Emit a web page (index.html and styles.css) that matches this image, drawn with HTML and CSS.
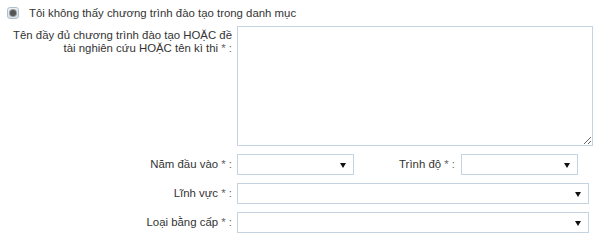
FILE: index.html
```html
<!DOCTYPE html>
<html lang="vi">
<head>
    <meta charset="UTF-8">
    <title>Chương trình đào tạo</title>
    <link rel="stylesheet" href="styles.css">
</head>
<body>
    <div class="edu-form">
        <label class="radio-row">
            <span class="radio-box"><span class="radio-dot"></span></span>
            Tôi không thấy chương trình đào tạo trong danh mục
        </label>

        <div class="form-row">
            <div class="form-label">Tên đầy đủ chương trình đào tạo HOẶC đề tài nghiên cứu HOẶC tên kì thi <span class="req">* :</span></div>
            <textarea class="form-textarea"></textarea>
        </div>

        <div class="form-row row-select">
            <div class="form-label">Năm đầu vào <span class="req">* :</span></div>
            <div class="split">
                <div class="select select-short"><span class="arrow"></span></div>
                <div class="form-label label-inline">Trình độ <span class="req">* :</span></div>
                <div class="select select-short"><span class="arrow"></span></div>
            </div>
        </div>

        <div class="form-row row-select">
            <div class="form-label">Lĩnh vực <span class="req">* :</span></div>
            <div class="select select-wide"><span class="arrow"></span></div>
        </div>

        <div class="form-row row-select">
            <div class="form-label">Loại bằng cấp <span class="req">* :</span></div>
            <div class="select select-wide"><span class="arrow"></span></div>
        </div>
    </div>
</body>
</html>
```

FILE: styles.css
```css
* {
    margin: 0;
    padding: 0;
    box-sizing: border-box;
}

body {
    font-family: "Liberation Sans", Arial, sans-serif;
    font-size: 11.4px;
    color: #333;
    background: #fff;
}

.edu-form {
    width: 600px;
    padding-top: 6px;
}

.radio-row {
    display: flex;
    align-items: center;
    gap: 10px;
    padding-left: 7px;
    height: 13px;
}

.radio-box {
    width: 12px;
    height: 12px;
    border: 1px solid #aebfd4;
    border-radius: 3px;
    background: linear-gradient(#eef2f7, #d9e1ea);
    display: flex;
    align-items: center;
    justify-content: center;
}

.radio-dot {
    width: 6px;
    height: 6px;
    border-radius: 50%;
    background: #555;
    box-shadow: 0 0 0 1px #9a9a9a;
}

.form-row {
    display: grid;
    grid-template-columns: 232px 1fr;
    column-gap: 5px;
    margin-top: 7px;
}

.form-label {
    text-align: right;
    line-height: 13px;
    padding-top: 3px;
}

.req {
    color: #666;
}

.form-textarea {
    display: block;
    width: 356px;
    height: 120px;
    border: 1px solid #c5d3e2;
    resize: both;
    font-family: inherit;
}

.row-select {
    align-items: center;
    margin-top: 8px;
}

.row-select .form-label {
    padding-top: 0;
}

.split {
    display: flex;
    align-items: center;
}

.label-inline {
    width: 101px;
    margin-right: 6px;
}

.select {
    height: 21px;
    border: 1px solid #c5d3e2;
    background: #fff;
    display: flex;
    align-items: center;
    justify-content: flex-end;
    padding-right: 7px;
}

.select-short {
    width: 117px;
}

.select-wide {
    width: 352px;
}

/* small solid down triangle */
.arrow {
    width: 0;
    height: 0;
    border-left: 3px solid transparent;
    border-right: 3px solid transparent;
    border-top: 5px solid #111;
    margin-top: 1px;
}
```
